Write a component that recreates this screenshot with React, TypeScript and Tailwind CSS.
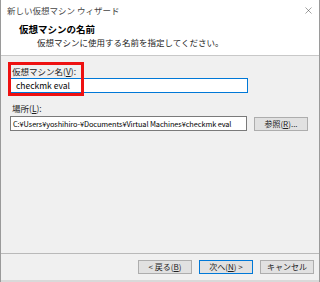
import { X } from 'lucide-react';

const font = { fontFamily: '"Noto Sans CJK JP", "Noto Sans", sans-serif' };

const Btn = ({ label, primary }: { label: React.ReactNode; primary?: boolean }) => (
  <button
    className={`h-[14px] w-[54px] flex items-center justify-center bg-[#e1e1e1] text-[8px] leading-none text-[#222] border ${
      primary ? 'border-[#0078d7]' : 'border-[#adadad]'
    }`}
  >
    {label}
  </button>
);

export default function App() {
  return (
    <div
      className="relative w-[320px] h-[282px] flex flex-col bg-[#f0f0f0] border-l border-r border-[#9a9a9a] overflow-hidden"
      style={font}
    >
      {/* title bar + header */}
      <div className="bg-white h-[56px] border-b border-[#c8c8c8] flex flex-col">
        <div className="h-[21px] flex items-center justify-between pl-[6px] pr-[5px]">
          <span className="text-[8.5px] text-[#444]">新しい仮想マシン ウィザード</span>
          <X size={11} strokeWidth={1} className="text-[#333]" />
        </div>
        <div className="pl-[18px] pt-[2px] text-[9.5px] font-bold leading-[12px] text-black">仮想マシンの名前</div>
        <div className="pl-[36px] pt-[2px] text-[8.5px] leading-[11px] text-[#222]">仮想マシンに使用する名前を指定してください。</div>
      </div>

      {/* body */}
      <div className="flex-1 flex flex-col px-[9px]">
        <div className="mt-[10px] pl-[2px] text-[8.5px] leading-[11px] text-[#222]">
          仮想マシン名(<span className="underline">V</span>):
        </div>
        <div className="mt-[1px] w-[238px] h-[15px] bg-white border border-[#0078d7] flex items-center pl-[5px] text-[8.5px] text-black">
          checkmk eval
        </div>

        <div className="mt-[10px] pl-[2px] text-[8.5px] leading-[11px] text-[#222]">
          場所(<span className="underline">L</span>):
        </div>
        <div className="mt-[2px] flex items-center gap-[7px]">
          <div className="w-[237px] h-[15px] bg-white border border-[#7a7a7a] flex items-center pl-[2px] text-[7.4px] tracking-[-0.1px] text-black whitespace-nowrap overflow-hidden">
            C:¥Users¥yoshihiro-¥Documents¥Virtual Machines¥checkmk eval
          </div>
          <Btn label={<>参照(<span className="underline">R</span>)...</>} />
        </div>
      </div>

      {/* footer */}
      <div className="h-[27px] border-t border-[#b9b9b9] flex items-start justify-end gap-[7px] pr-[5px] pt-[6px]">
        <Btn label={<>&lt; 戻る(<span className="underline">B</span>)</>} />
        <Btn primary label={<>次へ(<span className="underline">N</span>) &gt;</>} />
        <Btn label="キャンセル" />
      </div>
      <div className="h-[2px] bg-[#d9d9d9]" />

      {/* red annotation box */}
      <div className="absolute left-[7px] top-[62px] w-[76px] h-[34px] border-[3px] border-[#ee1111]" />
    </div>
  );
}
